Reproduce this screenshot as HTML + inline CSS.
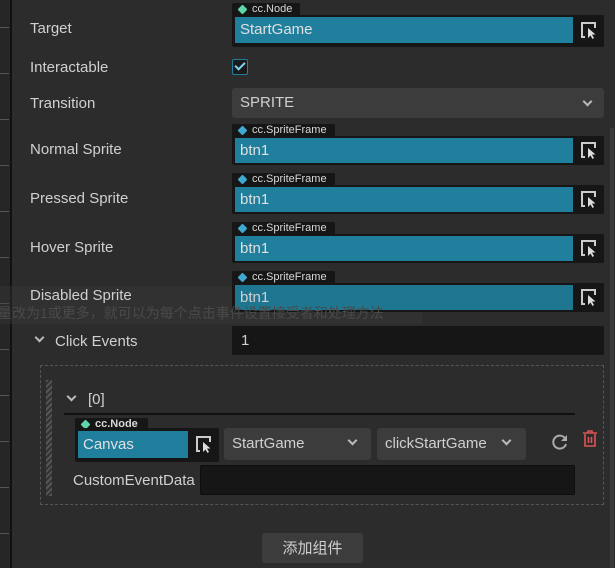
<!DOCTYPE html><html><head><meta charset="utf-8"><style>
*{margin:0;padding:0;box-sizing:border-box}
body{width:615px;height:568px;background:#2c2c2c;position:relative;overflow:hidden;font-family:"Liberation Sans","Noto Sans CJK SC",sans-serif;font-size:15px;color:#cfcfcf}
.a{position:absolute}
.lbl{position:absolute;left:30px;font-size:15px;color:#d0d0d0;line-height:16px;margin-top:1px}
.tag{position:absolute;height:13px;background:#161616;border-radius:2px 2px 0 0;font-size:11px;color:#d8d8d8;line-height:13px;padding-left:20px}
.tag i{position:absolute;left:7px;top:3px;width:7px;height:7px;transform:rotate(45deg);border-radius:1px}
.box{position:absolute;background:#161616;border-radius:2px}
.blue{position:absolute;background:#1f7f9c;color:#e0e0e0;font-size:15px;line-height:26px;padding-left:5px}
.pick{position:absolute;width:18px;height:18px}
.sel{position:absolute;background:#3c3c3c;border-radius:3px;color:#d0d0d0;line-height:30px;padding-left:8px}
.chev{position:absolute;width:7px;height:7px;border-right:2px solid #bbb;border-bottom:2px solid #bbb;transform:rotate(45deg)}
</style></head><body>
<svg width="0" height="0" style="position:absolute"><defs><symbol id="pk" viewBox="0 0 18 18"><path d="M5 16H2V2H15V7" fill="none" stroke="#ccc" stroke-width="2"/><path d="M8 7L8 17L10.5 14.5L12.5 18L14 17L12 13.5L15.5 13.5Z" fill="#ddd"/></symbol></defs></svg>
<div class="a" style="left:0;top:0;width:10px;height:568px;background:#262626"></div>
<div class="a" style="left:10px;top:0;width:2px;height:568px;background:#111"></div>
<div class="a" style="left:0;top:27px;width:9px;height:1px;background:#555"></div>
<div class="a" style="left:0;top:73px;width:9px;height:1px;background:#555"></div>
<div class="a" style="left:0;top:119px;width:9px;height:1px;background:#555"></div>
<div class="a" style="left:0;top:165px;width:9px;height:1px;background:#555"></div>
<div class="a" style="left:0;top:211px;width:9px;height:1px;background:#555"></div>
<div class="a" style="left:0;top:257px;width:9px;height:1px;background:#555"></div>
<div class="a" style="left:0;top:303px;width:9px;height:1px;background:#555"></div>
<div class="a" style="left:0;top:349px;width:9px;height:1px;background:#555"></div>
<div class="a" style="left:0;top:395px;width:9px;height:1px;background:#555"></div>
<div class="a" style="left:0;top:441px;width:9px;height:1px;background:#555"></div>
<div class="a" style="left:0;top:487px;width:9px;height:1px;background:#555"></div>
<div class="a" style="left:0;top:533px;width:9px;height:1px;background:#555"></div>
<div class="a" style="left:610px;top:128px;width:4px;height:440px;background:#3a3a3a"></div>

<div class="lbl" style="top:20px">Target</div>
<div class="tag" style="left:232px;top:3px;width:68px">cc.Node<i style="background:#5ed6a8"></i></div>
<div class="box" style="left:232px;top:15px;width:372px;height:32px"></div>
<div class="blue" style="left:235px;top:17px;width:338px;height:26px">StartGame</div>
<svg class="pick" style="left:580px;top:21px"><use href="#pk"/></svg>

<div class="lbl" style="top:59px">Interactable</div>
<div class="a" style="left:232px;top:59px;width:16px;height:16px;background:#1a1a1a;border:1px solid #1f7f9c;border-radius:2px"></div>
<div class="a" style="left:237px;top:60px;width:6px;height:10px;border-right:2px solid #7fd3f0;border-bottom:2px solid #7fd3f0;transform:rotate(45deg)"></div>

<div class="lbl" style="top:95px">Transition</div>
<div class="sel" style="left:232px;top:88px;width:372px;height:30px">SPRITE</div>
<div class="chev" style="left:584px;top:98px"></div>

<div class="lbl" style="top:141px">Normal Sprite</div>
<div class="tag" style="left:232px;top:124px;width:103px">cc.SpriteFrame<i style="background:#3fa9d0"></i></div>
<div class="box" style="left:232px;top:136px;width:372px;height:29px"></div>
<div class="blue" style="left:235px;top:138px;width:338px;height:25px">btn1</div>
<svg class="pick" style="left:580px;top:141px"><use href="#pk"/></svg>

<div class="lbl" style="top:190px">Pressed Sprite</div>
<div class="tag" style="left:232px;top:173px;width:103px">cc.SpriteFrame<i style="background:#3fa9d0"></i></div>
<div class="box" style="left:232px;top:185px;width:372px;height:29px"></div>
<div class="blue" style="left:235px;top:187px;width:338px;height:25px">btn1</div>
<svg class="pick" style="left:580px;top:190px"><use href="#pk"/></svg>

<div class="lbl" style="top:239px">Hover Sprite</div>
<div class="tag" style="left:232px;top:222px;width:103px">cc.SpriteFrame<i style="background:#3fa9d0"></i></div>
<div class="box" style="left:232px;top:234px;width:372px;height:29px"></div>
<div class="blue" style="left:235px;top:236px;width:338px;height:25px">btn1</div>
<svg class="pick" style="left:580px;top:239px"><use href="#pk"/></svg>

<div class="a" style="left:0;top:286px;width:422px;height:38px;background:rgba(60,60,60,0.35)"></div>
<div class="lbl" style="top:287px">Disabled Sprite</div>
<div class="tag" style="left:232px;top:271px;width:103px">cc.SpriteFrame<i style="background:#3fa9d0"></i></div>
<div class="box" style="left:232px;top:283px;width:372px;height:29px"></div>
<div class="blue" style="left:235px;top:285px;width:338px;height:25px;opacity:.92">btn1</div>
<svg class="pick" style="left:580px;top:288px"><use href="#pk"/></svg>
<div class="a" style="left:-2px;top:303px;font-size:14px;color:#4a4a4a;white-space:nowrap">量改为1或更多，就可以为每个点击事件设置接受者和处理方法</div>

<div class="chev" style="left:36px;top:334px"></div>
<div class="a" style="left:55px;top:333px;color:#d0d0d0">Click Events</div>
<div class="box" style="left:232px;top:326px;width:372px;height:29px;color:#d0d0d0;padding:6px 9px">1</div>

<div class="a" style="left:40px;top:365px;width:564px;height:140px;border:1px dashed #555"></div>
<div class="a" style="left:46px;top:380px;width:6px;height:116px;background:repeating-linear-gradient(135deg,#555 0 2px,#333 2px 4px)"></div>
<div class="chev" style="left:68px;top:393px"></div>
<div class="a" style="left:88px;top:391px;color:#d0d0d0">[0]</div>
<div class="a" style="left:64px;top:413px;width:511px;height:2px;background:#111"></div>

<div class="tag" style="left:75px;top:418px;width:73px;font-weight:bold">cc.Node<i style="background:#5ed6a8"></i></div>
<div class="box" style="left:75px;top:428px;width:144px;height:34px"></div>
<div class="blue" style="left:78px;top:431px;width:110px;height:27px;line-height:28px">Canvas</div>
<svg class="pick" style="left:195px;top:435px"><use href="#pk"/></svg>
<div class="sel" style="left:224px;top:428px;width:147px;height:32px;line-height:32px">StartGame</div>
<div class="chev" style="left:349px;top:437px"></div>
<div class="sel" style="left:377px;top:428px;width:149px;height:32px;line-height:32px">clickStartGame</div>
<div class="chev" style="left:503px;top:437px"></div>
<svg class="a" style="left:551px;top:433px" width="18" height="18" viewBox="0 0 18 18"><path d="M14.5 6A6.5 6.5 0 1 0 15 11" fill="none" stroke="#aaa" stroke-width="2"/><path d="M16 2V8H10Z" fill="#aaa"/></svg>
<svg class="a" style="left:582px;top:430px" width="16" height="17" viewBox="0 0 16 17"><path d="M1 3H15M6 3V1H10V3M3 4V16H13V4M6.5 7V13M9.5 7V13" fill="none" stroke="#e05555" stroke-width="1.6"/></svg>
<div class="a" style="left:73px;top:472px;color:#d0d0d0">CustomEventData</div>
<div class="box" style="left:200px;top:465px;width:375px;height:30px;border:1px solid #0e0e0e"></div>

<div class="a" style="left:262px;top:533px;width:101px;height:30px;background:#3c3c3c;border-radius:3px;text-align:center;line-height:31px;color:#d0d0d0">添加组件</div>
</body></html>
